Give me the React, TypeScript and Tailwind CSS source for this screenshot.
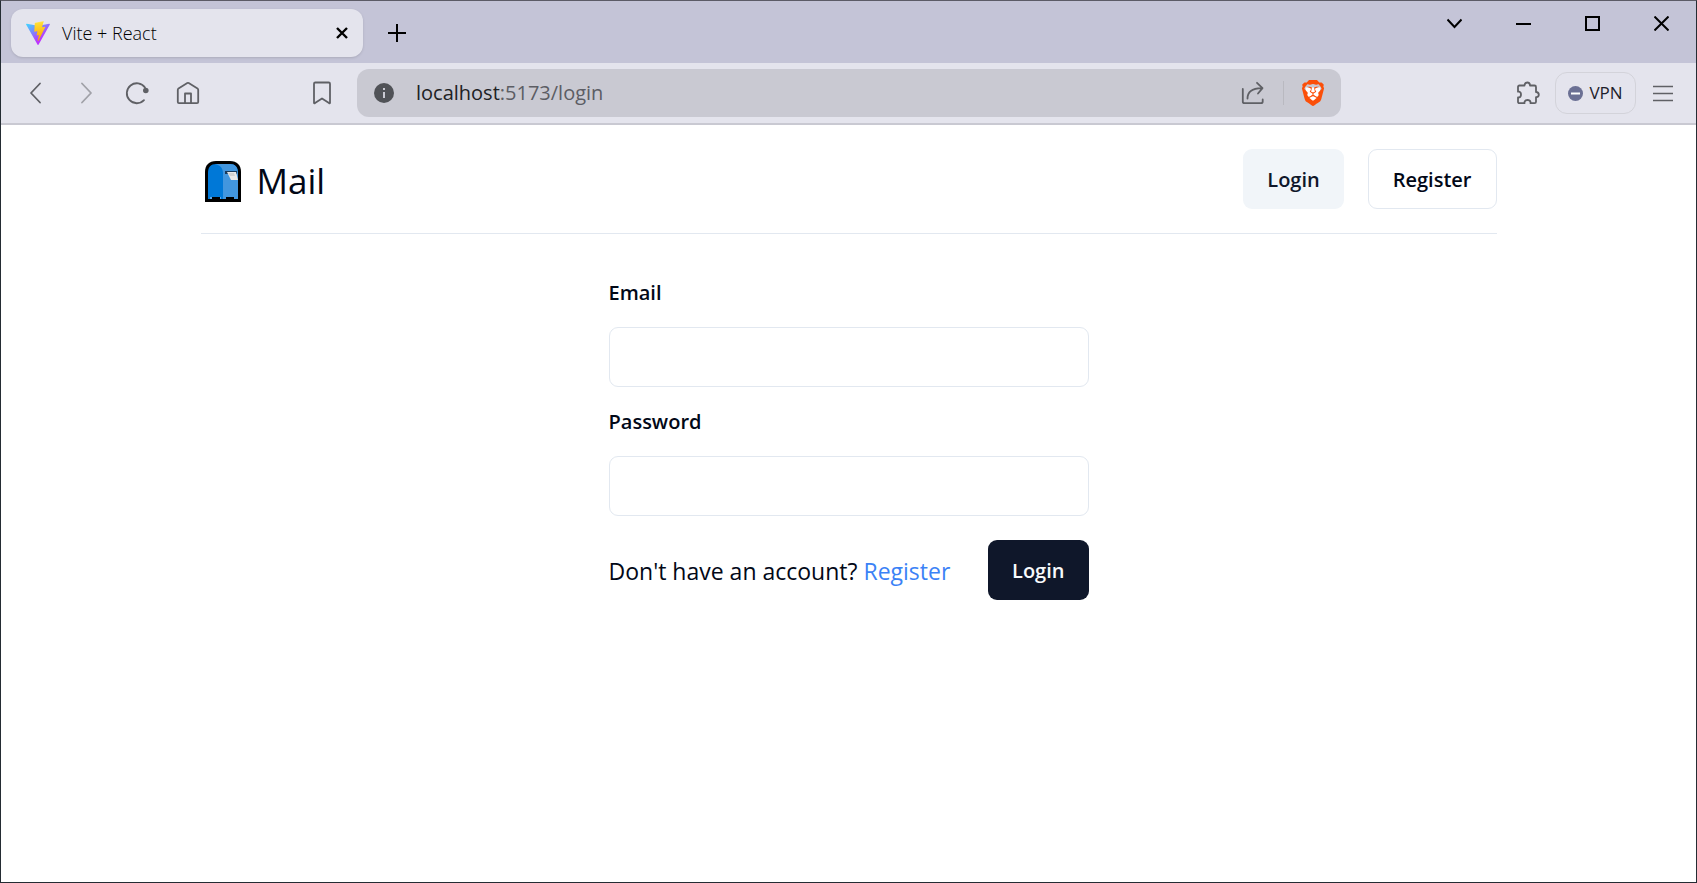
import type { ReactNode } from "react";
import { SiBrave } from "react-icons/si";

function ViteLogo() {
  return (
    <svg viewBox="0 0 256 257" className="size-6 shrink-0" aria-hidden="true">
      <defs>
        <linearGradient id="vite-shield" x1="-.828%" x2="57.636%" y1="7.652%" y2="78.411%">
          <stop offset="0%" stopColor="#41D1FF" />
          <stop offset="100%" stopColor="#BD34FE" />
        </linearGradient>
        <linearGradient id="vite-bolt" x1="43.376%" x2="50.316%" y1="2.242%" y2="89.03%">
          <stop offset="0%" stopColor="#FFEA83" />
          <stop offset="8.333%" stopColor="#FFDD35" />
          <stop offset="100%" stopColor="#FFA800" />
        </linearGradient>
      </defs>
      <path
        fill="url(#vite-shield)"
        d="M255.153 37.938L134.897 252.976c-2.483 4.44-8.862 4.466-11.382.048L.875 37.958c-2.746-4.814 1.371-10.646 6.827-9.67l120.385 21.517a6.537 6.537 0 0 0 2.322-.004l117.867-21.483c5.438-.991 9.574 4.796 6.877 9.62Z"
      />
      <path
        fill="url(#vite-bolt)"
        d="M185.432.063L96.44 17.501a3.268 3.268 0 0 0-2.634 3.014l-5.474 92.456a3.268 3.268 0 0 0 3.997 3.378l24.777-5.718c2.318-.535 4.413 1.507 3.936 3.838l-7.361 36.047c-.495 2.426 1.782 4.5 4.151 3.78l15.304-4.649c2.372-.72 4.652 1.36 4.15 3.788l-11.698 56.621c-.732 3.542 3.979 5.473 5.943 2.437l1.313-2.028l72.516-144.72c1.215-2.423-.88-5.186-3.54-4.672l-25.505 4.922c-2.396.462-4.435-1.77-3.759-4.114l16.646-57.705c.677-2.35-1.37-4.583-3.769-4.113Z"
      />
    </svg>
  );
}

function MailboxLogo() {
  return (
    <svg viewBox="0 0 36 41" className="h-[41px] w-9 shrink-0" aria-hidden="true">
      <path d="M0 41V11C0 4 4 0 11 0h14c7 0 11 4 11 11v30Z" fill="#000" />
      <path d="M3 38V12c0-6 3-9 8-9h14c5 0 8 3 8 9v26h-4v-2h-8v2h-6v-2H7v2Z" fill="#0078d7" />
      <path d="M10 3h15c5 0 8 3 8 9v22H18V12c0-5-3-8-8-9Z" fill="#4296de" />
      <path d="M18 34h15v4h-4v-2h-8v2h-3Z" fill="#4296de" />
      <path d="M5 36h2v2H5ZM15 36h1v2h-1Z" fill="#5aa8ea" />
      <path d="M20 10h12v3H20Z" fill="#173a5c" />
      <path d="M22 11h9l2 8h-7l-3-6Z" fill="#e9e9e9" />
      <path d="M23 12h6l1 3h-5Z" fill="#d2d2d2" />
    </svg>
  );
}

type IconButtonProps = { label: string; className?: string; children: ReactNode };

function IconButton({ label, className = "", children }: IconButtonProps) {
  return (
    <button
      type="button"
      aria-label={label}
      className={`flex size-6 shrink-0 items-center justify-center text-[#5f6065] ${className}`}
    >
      <svg
        viewBox="0 0 24 24"
        className="size-6"
        fill="none"
        stroke="currentColor"
        strokeWidth="1.8"
        strokeLinecap="round"
        strokeLinejoin="round"
      >
        {children}
      </svg>
    </button>
  );
}

function WindowButton({ label, children }: { label: string; children: ReactNode }) {
  return (
    <button type="button" aria-label={label} className="flex h-11 w-[69px] items-center justify-center">
      <svg viewBox="0 0 15 15" className="size-[15px]" fill="none" stroke="#000" strokeWidth="2">
        {children}
      </svg>
    </button>
  );
}

function TabStrip() {
  return (
    <div className="flex h-[62px] justify-between bg-[#c4c4d7] pl-2.5">
      <div className="flex items-center pb-[-2px]">
        <div className="mt-0.5 flex h-12 w-[352px] items-center rounded-xl bg-[#e4e4ed] pr-3.5 pl-[15px] shadow-sm">
          <ViteLogo />
          <span className="ml-3 flex-1 text-lg leading-6 font-light text-black">Vite + React</span>
          <button type="button" aria-label="Close tab" className="px-px">
            <svg viewBox="0 0 12 12" className="size-3" stroke="#000" strokeWidth="2.4">
              <path d="M1 1l10 10M11 1L1 11" />
            </svg>
          </button>
        </div>
        <button type="button" aria-label="New tab" className="mt-0.5 ml-[25px]">
          <svg viewBox="0 0 18 18" className="size-[18px]" stroke="#000" strokeWidth="2">
            <path d="M9 0v18M0 9h18" />
          </svg>
        </button>
      </div>
      <div className="flex">
        <WindowButton label="Search tabs">
          <path d="M.5 3.500l7 7.500 7-7.500" />
        </WindowButton>
        <WindowButton label="Minimize">
          <path d="M0 8h15" />
        </WindowButton>
        <WindowButton label="Maximize">
          <path d="M1 1h13v13H1Z" />
        </WindowButton>
        <WindowButton label="Close">
          <path d="M.5.5l14 14M14.500.5l-14 14" />
        </WindowButton>
      </div>
    </div>
  );
}

function Toolbar() {
  return (
    <div className="flex h-[62px] items-center border-b-2 border-[#c9c9d2] bg-[#e4e4ed]">
      <div className="flex w-[356px] shrink-0 items-center justify-between pr-[23px] pl-[22px]">
        <div className="flex gap-[27px]">
          <IconButton label="Back">
            <path d="M17 2.500L8 12l9 9.500" />
          </IconButton>
          <IconButton label="Forward" className="opacity-50">
            <path d="M8 2.500l9 9.500-9 9.500" />
          </IconButton>
          <IconButton label="Reload">
            <path d="M19 19.200A10 10 0 1 1 20 6.500" />
            <circle cx="20.800" cy="9.500" r="2.800" fill="currentColor" stroke="none" />
          </IconButton>
          <IconButton label="Home">
            <path d="M1.800 8.800Q1.800 8 2.500 7.500L11.300 2Q12 1.600 12.700 2L21.500 7.500Q22.200 8 22.200 8.800V21Q22.200 22.200 21 22.200H3Q1.800 22.200 1.800 21Z" />
            <path d="M9 22v-9.500h6V22" />
          </IconButton>
        </div>
        <IconButton label="Bookmark">
          <path d="M4 22V2.800Q4 1.500 5.300 1.500h13.400Q20 1.500 20 2.800V22q-.3.500-1 .1L12 17.500l-7 4.600q-.7.400-1-.1Z" />
        </IconButton>
      </div>
      <div className="flex h-12 min-w-0 flex-1 items-center rounded-xl bg-[#c9c9d2] pr-[15px] pl-[17px]">
        <button type="button" aria-label="View site information">
          <svg viewBox="0 0 20 20" className="size-5" aria-hidden="true">
            <circle cx="10" cy="10" r="10" fill="#505257" />
            <path d="M9 9h2v6H9ZM9 5h2v2H9Z" fill="#c9c9d2" />
          </svg>
        </button>
        <div role="textbox" aria-label="Address" className="ml-[22px] flex-1 text-xl leading-7 text-[#5c5d64]">
          <span className="text-[#202124]">localhost</span>:5173/login
        </div>
        <IconButton label="Share">
          <path d="M1.800 8v12.500Q1.800 22.200 3.500 22.200h16.500Q21.700 22.200 21.700 20.500V18.500" />
          <path d="M6.500 17.500Q6.500 7.500 20.500 7.200M16 1.800l5.500 5.400L17 12.500" />
        </IconButton>
        <span className="ml-[18px] h-6 w-px bg-[#b9b9c0]" />
        <button type="button" aria-label="Brave Shields" className="relative ml-4 size-[26px]">
          <svg viewBox="0 0 28 28" className="absolute inset-0 size-[26px]" aria-hidden="true">
            <path d="M6 8h16l-1 10-7 6-7-6Z" fill="#fff" />
          </svg>
          <SiBrave className="relative size-[26px] text-[#fb4f09]" />
        </button>
      </div>
      <div className="flex w-[355px] shrink-0 items-center justify-end pr-[21px]">
        <IconButton label="Extensions">
          <path d="M2 6Q2 4.500 3.500 4.500H8.500V4Q9 1.500 11.300 1.500T14 4V4.500H18.500Q20 4.500 20 6V11H20.500Q22.800 11.500 22.800 13.700T20.500 16.200H20V20.700Q20 22.200 18.500 22.200H14.500V21Q14 19 11.500 19T8.500 21V22.200H3.500Q2 22.200 2 20.700V16.500H3Q5 16 5 13.500T3 10.700H2Z" />
        </IconButton>
        <button
          type="button"
          className="ml-[15px] flex h-[42px] w-[81px] items-center justify-center gap-1.5 rounded-xl border border-[#d3d3da] text-[17px] text-[#1d1d2b]"
        >
          <svg viewBox="0 0 15 15" className="size-[15px]" aria-hidden="true">
            <circle cx="7.500" cy="7.500" r="7.500" fill="#6b7094" />
            <path d="M3 6.500h9v2H3Z" fill="#fff" />
          </svg>
          VPN
        </button>
        <IconButton label="Menu" className="ml-[15px]">
          <path d="M2 5.500h20M2 12.500h20M2 19.500h20" strokeLinecap="butt" strokeWidth="1.400" />
        </IconButton>
      </div>
    </div>
  );
}

function Field({ id, label, type }: { id: string; label: string; type: string }) {
  return (
    <div className="flex flex-col gap-[23px]">
      <label htmlFor={id} className="text-[20px] leading-[22px] font-semibold">
        {label}
      </label>
      <input
        id={id}
        name={id}
        type={type}
        className="h-[60px] w-full rounded-[9px] border border-[#e2e8f0] bg-white px-4 text-xl"
      />
    </div>
  );
}

function LoginPage() {
  return (
    <div className="mx-auto w-full max-w-[1296px] text-[#020817]">
      <header className="flex items-center justify-between border-b border-[#e2e8f0] py-6">
        <a href="/" className="flex items-center gap-4 pt-1 pl-1 text-[35px] leading-[54px]">
          <MailboxLogo />
          Mail
        </a>
        <nav className="flex gap-6 text-[20px] font-semibold">
          <a
            href="/login"
            className="flex h-[60px] items-center rounded-[9px] bg-[#f1f5f9] px-6 pt-0.5 text-[#0f172a]"
          >
            Login
          </a>
          <a
            href="/register"
            className="flex h-[60px] items-center rounded-[9px] border border-[#e2e8f0] px-6 pt-0.5"
          >
            Register
          </a>
        </nav>
      </header>
      <form className="mx-auto flex max-w-[480px] flex-col gap-6 pt-12" onSubmit={(e) => e.preventDefault()}>
        <Field id="email" label="Email" type="email" />
        <Field id="password" label="Password" type="password" />
        <div className="flex items-center justify-between">
          <p className="pt-0.5 text-[23px]">
            Don't have an account?{" "}
            <a href="/register" className="text-[#3b82f6]">
              Register
            </a>
          </p>
          <button
            type="submit"
            className="h-[60px] rounded-[9px] bg-[#0f172a] px-6 pt-0.5 text-[20px] font-semibold text-[#f8fafc]"
          >
            Login
          </button>
        </div>
      </form>
    </div>
  );
}

export default function App() {
  return (
    <div className="flex min-h-screen flex-col border border-[#242c33] border-t-[#5c5b66] bg-white font-['Open_Sans','Noto_Sans',sans-serif]">
      <TabStrip />
      <Toolbar />
      <main className="flex-1">
        <LoginPage />
      </main>
    </div>
  );
}
